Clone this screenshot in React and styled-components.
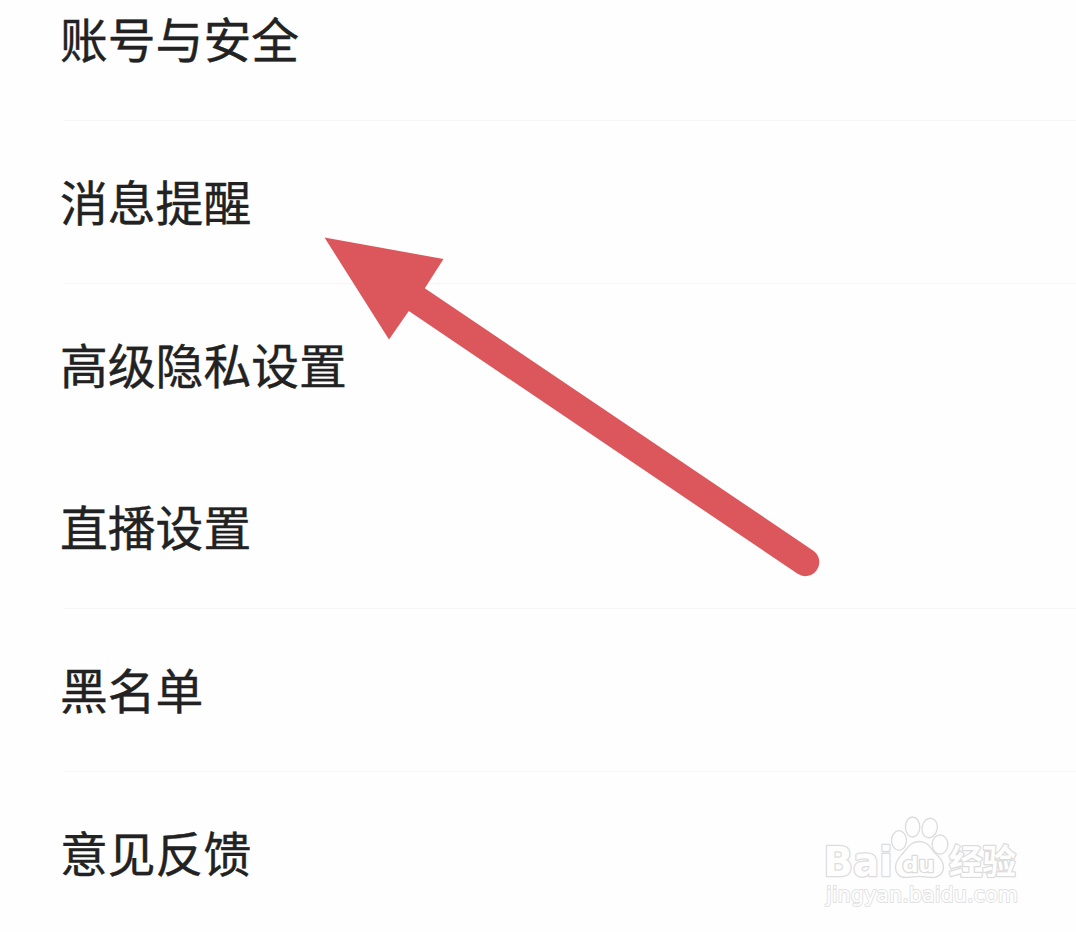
import React from 'react';
import styled, { createGlobalStyle } from 'styled-components';

const items = [
    { title: '账号与安全', line: true, height: 162 },
    { title: '消息提醒', line: true, height: 163 },
    { title: '高级隐私设置', line: false, height: 163 },
    { title: '直播设置', line: true, height: 162 },
    { title: '黑名单', line: true, height: 163 },
    { title: '意见反馈', line: false, height: 164 },
];

function Arrow() {
    return (
        <ArrowLayer width="520" height="360" viewBox="310 225 520 360">
            <path
                fill="#db575c"
                d="M324.5 237.5 L443.5 259 L424.8 288.2 L813 550.4 A14 14 0 0 1 797.6 573.8 L408.8 311 L389 339.5 Z"
            />
        </ArrowLayer>
    );
}

function Watermark() {
    return (
        <WatermarkLayer width="220" height="115" viewBox="810 805 220 115">
            <ellipse cx="899" cy="840.5" rx="7.5" ry="9.8" />
            <ellipse cx="912.6" cy="827" rx="7.2" ry="10" />
            <ellipse cx="929.6" cy="828" rx="7.6" ry="9.8" transform="rotate(12 929.6 828)" />
            <ellipse cx="940" cy="844.5" rx="7.8" ry="9.6" />
            <path d="M919.5 841.5 C927 841.5 930 847 934 852 C939 857 943.5 861 943.5 867 C943.5 873 939 877.5 932 877.5 C927 877.5 924 876.3 919 876.3 C914 876.3 911 877.5 906 877.5 C899 877.5 895.5 873 895.5 867 C895.5 860 900 857 904 852 C908 847 911 841.5 919.5 841.5 Z" />
            <LogoText x="823.5" y="876.3" size="41" textLength="69" lengthAdjust="spacingAndGlyphs">Bai</LogoText>
            <LogoText x="902.5" y="872" size="21.5" textLength="32" lengthAdjust="spacingAndGlyphs">du</LogoText>
            <LogoText x="949" y="874" size="34" textLength="67" lengthAdjust="spacingAndGlyphs">经验</LogoText>
            <SiteText x="826" y="902" textLength="192" lengthAdjust="spacingAndGlyphs">jingyan.baidu.com</SiteText>
        </WatermarkLayer>
    );
}

export default function App() {
    return (
        <Page>
            <GlobalStyle />
            <List>
                {items.map((item) => (
                    <Row key={item.title} $line={item.line} $height={item.height}>
                        <Title>{item.title}</Title>
                    </Row>
                ))}
            </List>
            <Arrow />
            <Watermark />
        </Page>
    );
}

const GlobalStyle = createGlobalStyle`
    body {
        margin: 0;
        background: #fefefe;
        overflow: hidden;
    }
`

const Page = styled.main`
    position: relative;
    height: 932px;
    overflow: hidden;
    font-family: 'Noto Sans CJK SC', sans-serif;
`

const List = styled.ul`
    margin: -41px 0 0 64px;
    padding: 0;
    list-style: none;
`

const Row = styled.li`
    box-sizing: border-box;
    display: flex;
    align-items: center;
    height: ${(props) => props.$height}px;
    padding-bottom: 3px;
    border-bottom: 1px solid ${(props) => (props.$line ? '#f5f5f5' : 'transparent')};
`

const Title = styled.span`
    margin-left: -4px;
    color: #222;
    font-size: 47.8px;
    line-height: 72px;
    -webkit-text-stroke: 0.4px #222;
`

const ArrowLayer = styled.svg`
    position: absolute;
    left: 310px;
    top: 225px;
`

const WatermarkLayer = styled.svg`
    position: absolute;
    left: 810px;
    top: 805px;
    fill: #fefefe;
    stroke: #dcdcdc;
    stroke-width: 1.3;
`

const LogoText = styled.text`
    font-family: 'DejaVu Sans', 'Noto Sans CJK SC', sans-serif;
    font-size: ${(props) => props.size}px;
    font-weight: 700;
    paint-order: stroke;
    stroke-width: 2.6;
    stroke-linejoin: round;
`

const SiteText = styled.text`
    font-family: 'DejaVu Sans', sans-serif;
    font-size: 22px;
    paint-order: stroke;
    stroke: #e2e2e2;
    stroke-width: 2;
    stroke-linejoin: round;
`
